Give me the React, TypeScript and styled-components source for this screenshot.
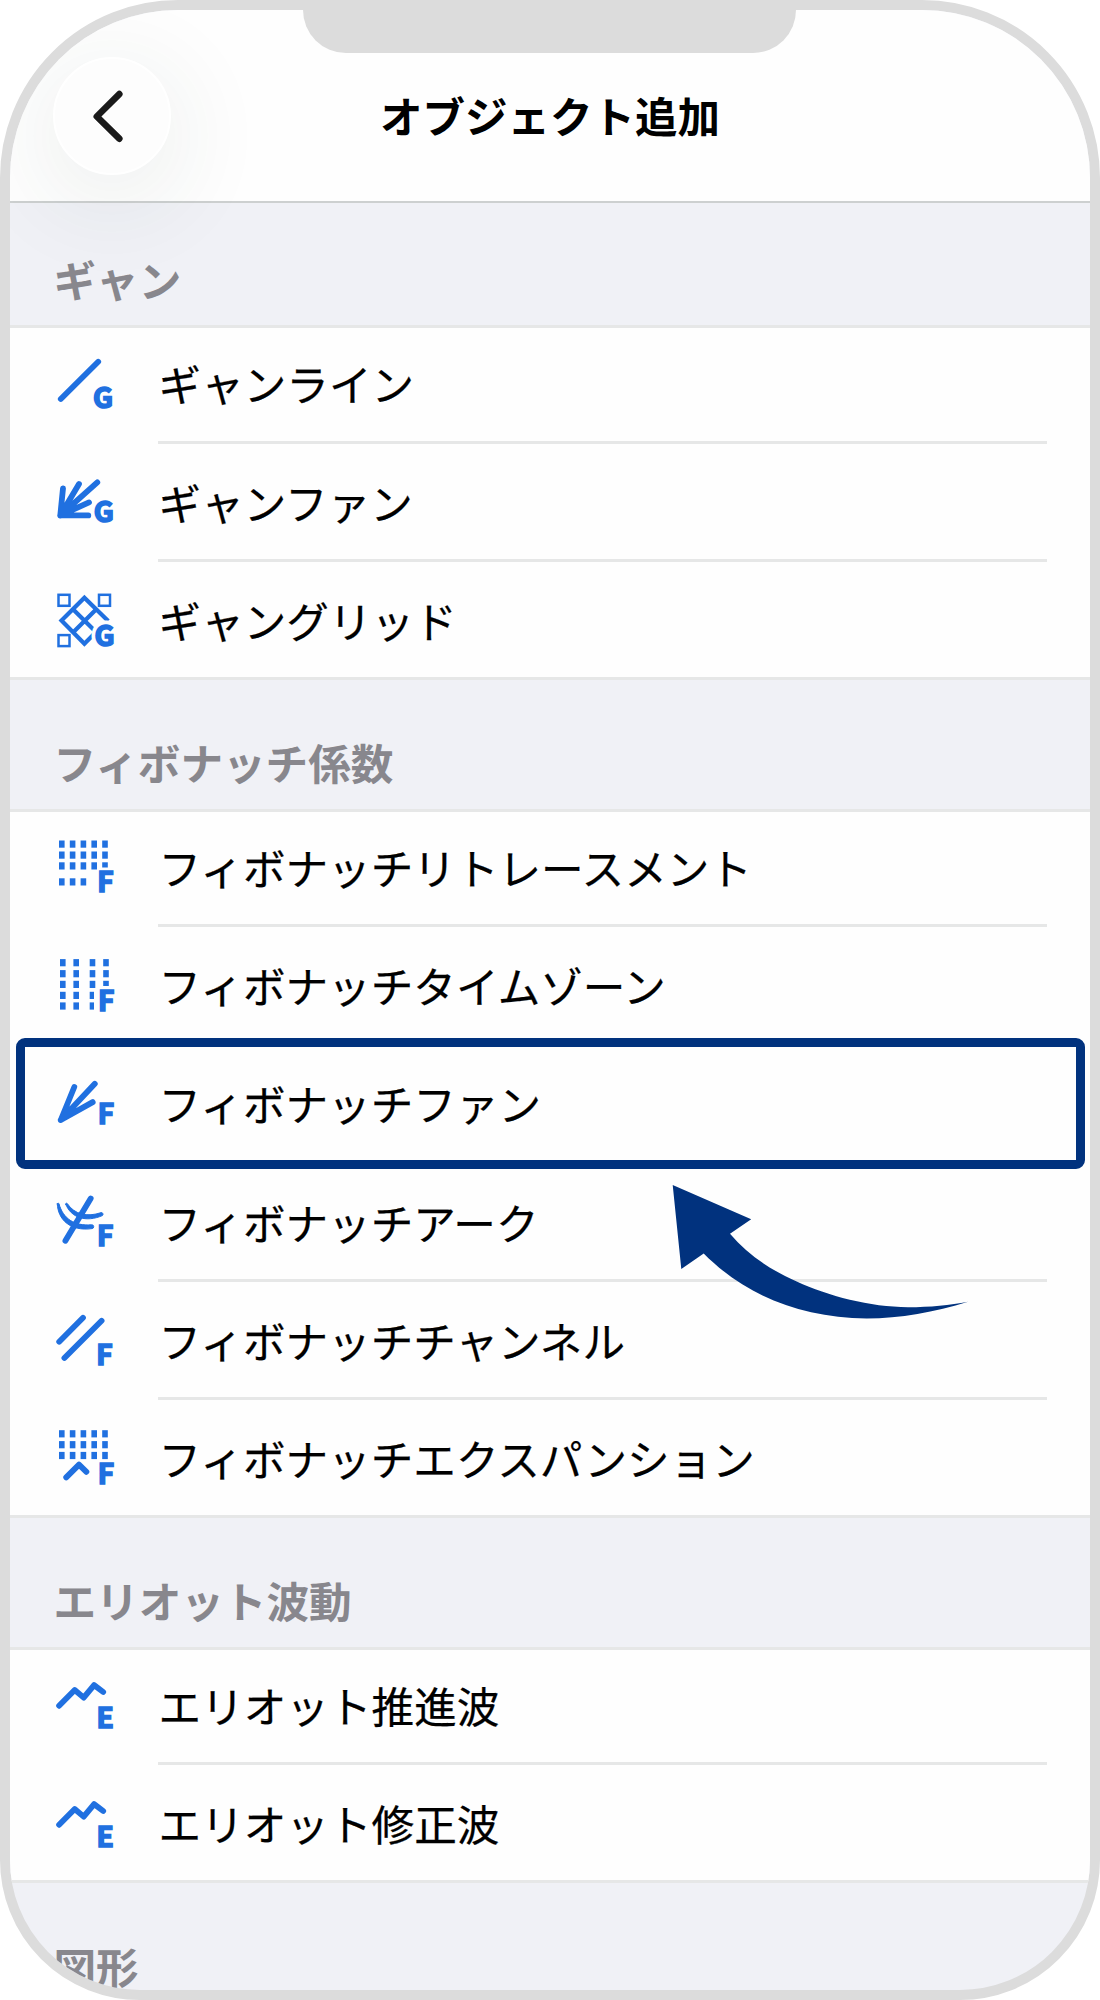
import React from "react";
import styled, { createGlobalStyle } from "styled-components";

const BLUE = "#2070e0";
const NAVY = "#01327e";
const LINE = "#e6e7e7";

const GlobalStyle = createGlobalStyle`
  *, *::before, *::after { box-sizing: border-box; }
  body {
    margin: 0;
    background: #ffffff;
    font-family: "Noto Sans CJK JP", "Noto Sans", sans-serif;
  }
`;

const Phone = styled.div`
  position: relative;
  width: 1100px;
  height: 2000px;
  border: 10px solid #dcdcdc;
  border-radius: 178px 178px 140px 140px;
  background: #f0f1f6;
  overflow: hidden;
`;

const Notch = styled.div`
  position: absolute;
  z-index: 3;
  top: 0;
  left: 293px;
  width: 493px;
  height: 43px;
  background: #dcdcdc;
  border-radius: 0 0 45px 45px;
`;

const TopBar = styled.header`
  display: grid;
  grid-template-columns: 118px 1fr 118px;
  align-items: center;
  height: 193px;
  padding: 20px 43px 0;
  background: #fefefe;
  border-bottom: 2px solid #cdd0d0;
`;

const BackButton = styled.button`
  position: relative;
  display: flex;
  align-items: center;
  justify-content: center;
  width: 118px;
  height: 118px;
  padding: 0;
  border: 2px solid #ffffff;
  border-radius: 50%;
  background: #fdfdfd;
  box-shadow: 0 20px 96px 12px rgba(40, 70, 50, 0.075);
`;

const Title = styled.h1`
  margin: 0;
  padding-bottom: 2px;
  font-size: 42.5px;
  font-weight: 700;
  line-height: 60px;
  text-align: center;
  white-space: nowrap;
  color: #000000;
`;

const SectionTitle = styled.h2<{ $first?: boolean }>`
  display: flex;
  align-items: center;
  height: ${(p) => (p.$first ? 122.3 : 128.8)}px;
  margin: 0;
  padding: ${(p) => (p.$first ? 29 : 36)}px 0 0 43.5px;
  font-size: 42.6px;
  font-weight: 700;
  line-height: 60px;
  color: #88878d;
`;

const List = styled.ul`
  margin: 0;
  padding: 0;
  list-style: none;
  background:
    linear-gradient(${LINE}, ${LINE}) top / 100% 3px no-repeat,
    linear-gradient(${LINE}, ${LINE}) bottom / 100% 3px no-repeat,
    #fefefe;
`;

const Row = styled.li`
  position: relative;
  display: flex;
  height: 118.22px;
  padding: 0 43px 0 44px;
`;

const IconSlot = styled.span`
  display: flex;
  align-items: center;
  width: 104px;
  padding-bottom: 3px;
`;

const Label = styled.span<{ $divider: boolean }>`
  flex: 1;
  display: flex;
  align-items: center;
  padding-left: 0.6px;
  border-bottom: 3px solid ${(p) => (p.$divider ? LINE : "transparent")};
  font-size: 42.6px;
  font-weight: 400;
  white-space: nowrap;
  color: #000000;
  -webkit-text-stroke: 0.25px #000000;
`;

const Highlight = styled.span`
  position: absolute;
  inset: -7.5px 5.5px -5.5px 5.5px;
  border: 9px solid ${NAVY};
  border-radius: 9px;
`;

const Pointer = styled.svg`
  position: absolute;
  z-index: 2;
  left: 652px;
  top: 1165px;
`;

const Glyph = styled.svg`
  display: block;
  overflow: visible;
  fill: none;
  stroke: ${BLUE};
  stroke-width: 5.8px;
  stroke-linecap: round;
  stroke-linejoin: round;

  text {
    font-family: "Noto Sans CJK JP", "Noto Sans", sans-serif;
    font-weight: 700;
    font-size: 28px;
    fill: ${BLUE};
    stroke: ${BLUE};
    stroke-width: 1.7px;
    stroke-linejoin: miter;
  }
`;

const Dot = styled.rect`
  fill: ${BLUE};
  stroke: none;
`;

const Taper = styled.path`
  fill: ${BLUE};
  stroke: ${BLUE};
  stroke-width: 1px;
`;

const Lattice = styled.g<{ $weight: number }>`
  stroke-width: ${(p) => p.$weight}px;
  stroke-linecap: butt;
  stroke-linejoin: miter;
`;

const Halo = styled.text`
  && {
    stroke: #fefefe;
    stroke-width: 9px;
  }
`;

type DotBox = [number, number, number, number];

const Dots = ({ items }: { items: DotBox[] }) => (
  <>
    {items.map(([x, y, w, h]) => (
      <Dot key={`${x}-${y}`} x={x} y={y} width={w} height={h} />
    ))}
  </>
);

const columns = [5, 15.8, 26.6, 37.4, 48.2];

const retracementDots: DotBox[] = [
  ...[6.5, 17.5].flatMap((y) => columns.map((x): DotBox => [x, y, 5.6, 7.2])),
  ...columns.map((x, i): DotBox => [x, 28.3, 5.6, i === 4 ? 5.2 : 7.2]),
  ...columns.slice(0, 3).map((x): DotBox => [x, 44.3, 5.6, 7.2]),
];

const expansionDots: DotBox[] = [5.2, 16.1, 26.9].flatMap((y) =>
  columns.map((x): DotBox => [x, y, 5.6, 7.2])
);

const timeZoneDots: DotBox[] = [
  ...[6.1, 17.1, 27.8, 38.8, 49.4].flatMap((y): DotBox[] => [
    [6, y, 5.6, 7.2],
    [19.4, y, 5.6, 7.2],
    [35.7, y, y > 35 ? 4.3 : 5.6, 7.2],
  ]),
  [49.2, 6.1, 5.6, 7.2],
  [49.2, 17.1, 5.6, 7.2],
  [49.2, 27.8, 5.6, 5.2],
];

const icons = {
  gannLine: (
    <>
      <path d="M6.8 48 44.2 10.8" />
      <text x="38.9" y="57">G</text>
    </>
  ),
  gannFan: (
    <>
      <path d="M6.3 46.4 9 19.4M6.3 46.4 25 15.1M6.3 46.4 43.3 13.4M6.3 46.4 35 33.4M6.3 46.4H34.3" />
      <text x="39.8" y="53.4">G</text>
    </>
  ),
  gannGrid: (
    <>
      <Lattice $weight={2.5}>
        <rect x="4.5" y="7.8" width="11" height="11" />
        <rect x="45" y="7.8" width="11" height="11" />
        <rect x="4.5" y="48.1" width="11" height="11" />
      </Lattice>
      <Lattice $weight={4.2}>
        <path d="M54.2 34 30.4 10.8 7.5 33.6 30.4 56.8 46 41" />
        <path d="M19 22.2 42 45M42.3 22.2 19 45.6" />
      </Lattice>
      <Halo x="40.6" y="58.6">G</Halo>
      <text x="40.6" y="58.6">G</text>
    </>
  ),
  fibRetracement: (
    <>
      <Dots items={retracementDots} />
      <text x="43.2" y="58.4">F</text>
    </>
  ),
  fibTimeZone: (
    <>
      <Dots items={timeZoneDots} />
      <text x="44.1" y="58">F</text>
    </>
  ),
  fibFan: (
    <>
      <path d="M6.8 49 20.3 16M6.8 49 40.8 12.8M6.8 49 38.7 31.1" />
      <text x="43.7" y="53">F</text>
    </>
  ),
  fibArc: (
    <>
      <path d="M11.4 51.8 36.7 9.6" />
      <Taper d="M3.3 14.8C3.8 30.4 16 42.6 38 39.6A1.9 1.9 0 0 0 37.6 35.8C20 37.2 9 29.4 5 14.8A0.9 0.9 0 0 0 3.3 14.8Z" />
      <Taper d="M11.7 15.2C17 28.9 32 33.6 48.4 26.6A1.7 1.7 0 0 0 47.2 23.6C33 28.4 20.5 25.4 13.3 14.6A0.9 0.9 0 0 0 11.7 15.2Z" />
      <text x="42.9" y="57.4">F</text>
    </>
  ),
  fibChannel: (
    <>
      <path d="M5.2 34.7 29 10.8M10.4 51 47.6 13.8" />
      <text x="42.3" y="58">F</text>
    </>
  ),
  fibExpansion: (
    <>
      <Dots items={expansionDots} />
      <path d="M12.2 52.4 25 39.6 32.4 46.8" />
      <text x="43.8" y="59">F</text>
    </>
  ),
  elliott: (
    <>
      <path d="M5.1 33.8 20.7 18 29.7 25.6 40.1 13.1 49.2 20" />
      <text x="42.6" y="56">E</text>
    </>
  ),
};

type IconName = keyof typeof icons;

interface Item {
  label: string;
  icon: IconName;
  selected?: boolean;
}

const sections: { title: string; items: Item[] }[] = [
  {
    title: "ギャン",
    items: [
      { label: "ギャンライン", icon: "gannLine" },
      { label: "ギャンファン", icon: "gannFan" },
      { label: "ギャングリッド", icon: "gannGrid" },
    ],
  },
  {
    title: "フィボナッチ係数",
    items: [
      { label: "フィボナッチリトレースメント", icon: "fibRetracement" },
      { label: "フィボナッチタイムゾーン", icon: "fibTimeZone" },
      { label: "フィボナッチファン", icon: "fibFan", selected: true },
      { label: "フィボナッチアーク", icon: "fibArc" },
      { label: "フィボナッチチャンネル", icon: "fibChannel" },
      { label: "フィボナッチエクスパンション", icon: "fibExpansion" },
    ],
  },
  {
    title: "エリオット波動",
    items: [
      { label: "エリオット推進波", icon: "elliott" },
      { label: "エリオット修正波", icon: "elliott" },
    ],
  },
];

/* The divider is left out on both sides of the selected row, where the frame covers it. */
const hasDivider = (items: Item[], i: number) =>
  i < items.length - 1 && !items[i].selected && !items[i + 1].selected;

export default function App() {
  return (
    <>
      <GlobalStyle />
      <Phone>
        <Notch />
        <TopBar>
          <BackButton aria-label="戻る">
            <svg width="60" height="60" viewBox="0 0 60 60" fill="none">
              <path
                d="M37.3 8.1 14.8 30.5 37.3 52.7"
                stroke="#1a1a1a"
                strokeWidth="6.6"
                strokeLinecap="round"
                strokeLinejoin="round"
              />
            </svg>
          </BackButton>
          <Title>オブジェクト追加</Title>
        </TopBar>
        {sections.map((section, index) => (
          <section key={section.title}>
            <SectionTitle $first={index === 0}>{section.title}</SectionTitle>
            <List>
              {section.items.map((item, i) => (
                <Row key={item.label}>
                  <IconSlot>
                    <Glyph width="64" height="64" viewBox="0 0 64 64">
                      {icons[item.icon]}
                    </Glyph>
                  </IconSlot>
                  <Label $divider={hasDivider(section.items, i)}>{item.label}</Label>
                  {item.selected && <Highlight />}
                </Row>
              ))}
            </List>
          </section>
        ))}
        <SectionTitle>図形</SectionTitle>
        <Pointer width="320" height="160" viewBox="662 1175 320 160">
          <path
            d="M672.7 1185 751.2 1219.3 730 1233.7C748 1255 770 1269.5 796.7 1281.6C828 1296 870 1307.2 908 1307.2C930 1307.2 950 1305 968 1301.7C935 1312 900 1318.4 866.7 1318.4C800 1318 745 1295 703.7 1253.5L681.3 1269Z"
            fill={NAVY}
          />
        </Pointer>
      </Phone>
    </>
  );
}
